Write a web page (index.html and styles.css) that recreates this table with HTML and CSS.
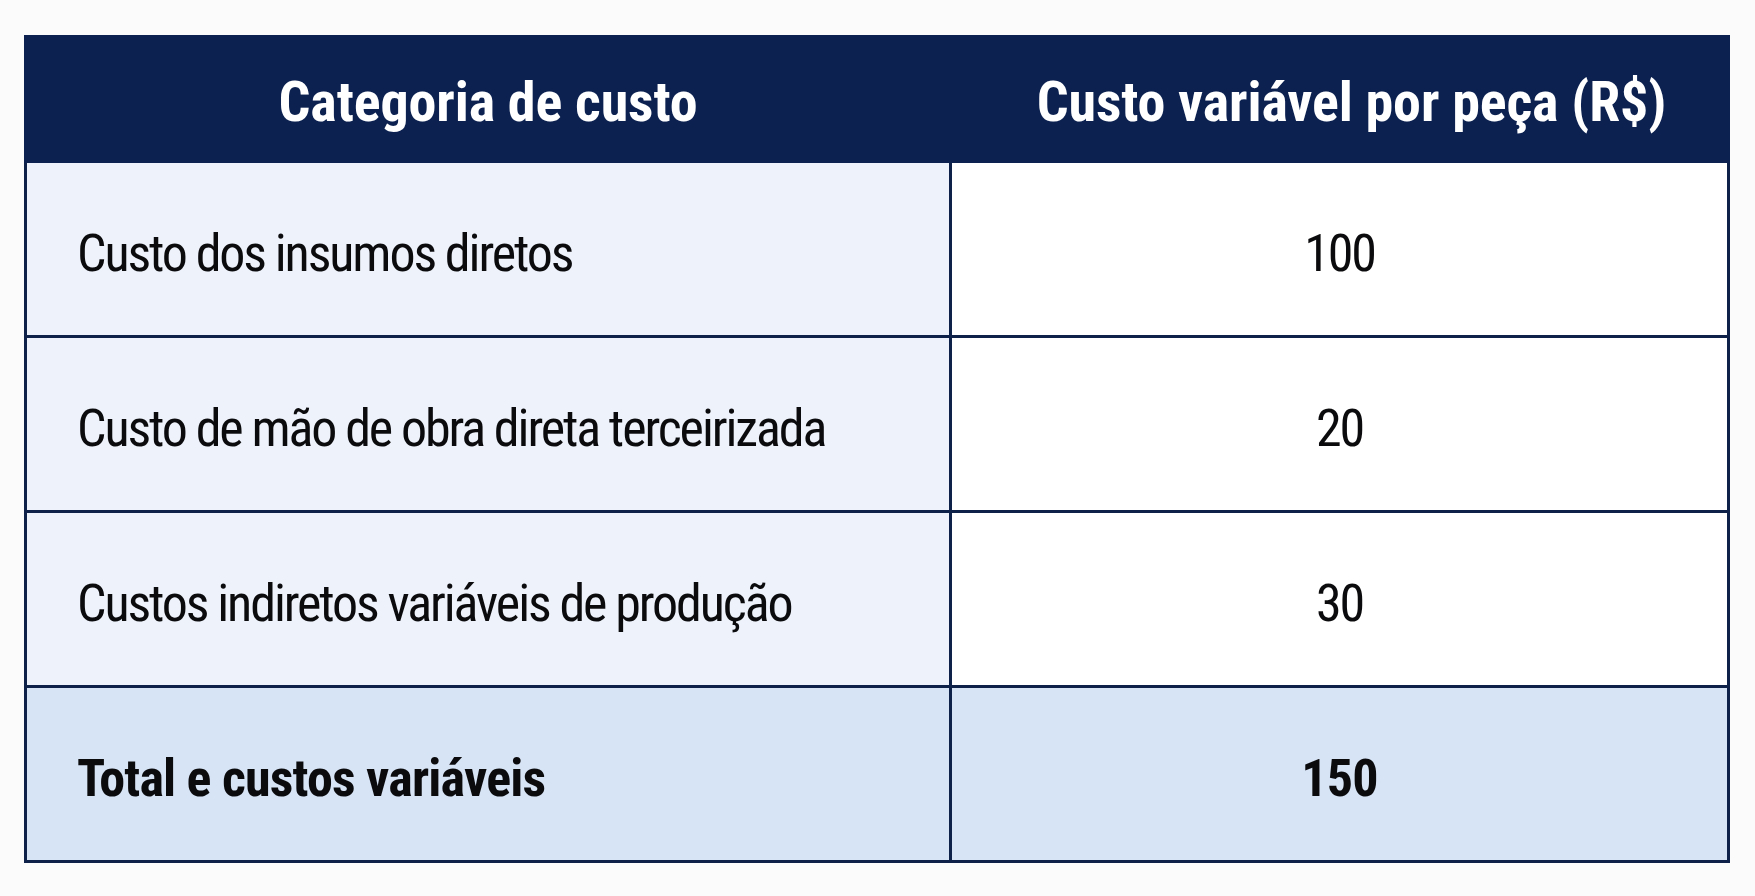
FILE: index.html
```html
<!DOCTYPE html>
<html lang="pt-BR">
<head>
<meta charset="utf-8">
<title>Custos variáveis</title>
<link rel="stylesheet" href="styles.css">
</head>
<body>
<div class="page">
  <table class="cost-table">
    <thead>
      <tr>
        <th class="col-cat">Categoria de custo</th>
        <th class="col-val">Custo variável por peça (R$)</th>
      </tr>
    </thead>
    <tbody>
      <tr>
        <td class="cat">Custo dos insumos diretos</td>
        <td class="val">100</td>
      </tr>
      <tr>
        <td class="cat">Custo de mão de obra direta terceirizada</td>
        <td class="val">20</td>
      </tr>
      <tr>
        <td class="cat">Custos indiretos variáveis de produção</td>
        <td class="val">30</td>
      </tr>
      <tr class="total">
        <td class="cat">Total e custos variáveis</td>
        <td class="val">150</td>
      </tr>
    </tbody>
  </table>
</div>
</body>
</html>
```

FILE: styles.css
```css
html, body {
  margin: 0;
  padding: 0;
  background: #fbfbfc;
}

.page {
  padding: 35px 0 0 24px;
}

.cost-table {
  width: 1706px;
  border-collapse: collapse;
  table-layout: fixed;
  font-family: Roboto, "Liberation Sans", sans-serif;
  color: #0b0b0d;
}

.col-cat {
  width: 922px;
}

.cost-table th {
  box-sizing: content-box;
  height: 116px;
  padding: 6px 0 0;
  background: #0c2150;
  color: #ffffff;
  font-weight: 700;
  font-size: 56px;
  font-stretch: 87%;
  letter-spacing: -0.1px;
  text-align: center;
  border: 3px solid #0c2150;
}

.cost-table th.col-cat {
  border-right: 2px solid #ffffff;
}

.cost-table th.col-val {
  padding-left: 24px;
}

.cost-table td {
  box-sizing: content-box;
  height: 164px;
  padding: 8px 0 0;
  border: 3px solid #0e2249;
  font-size: 52px;
  font-weight: 420;
  font-stretch: 75%;
  letter-spacing: -2.1px;
}

.cost-table td.cat {
  background: #eef3fb;
  padding-left: 50px;
  text-align: left;
}

.cost-table td.val {
  background: #ffffff;
  text-align: center;
}

.cost-table tr.total td {
  background: #d7e4f6;
  font-weight: 700;
  letter-spacing: -0.8px;
}
```
